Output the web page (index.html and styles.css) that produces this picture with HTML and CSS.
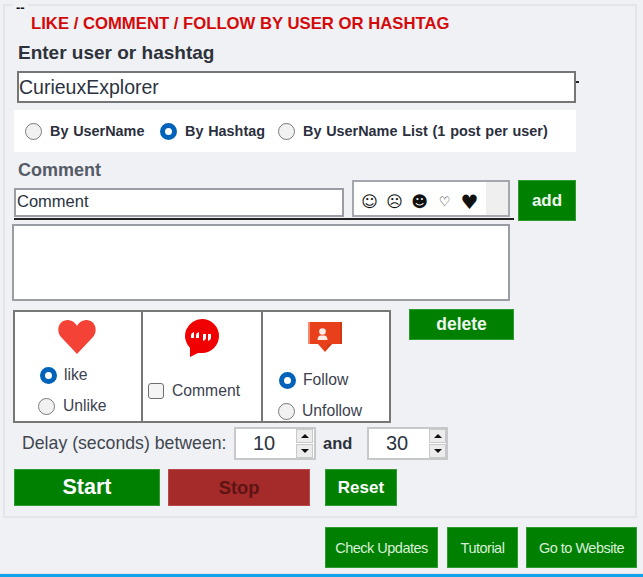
FILE: index.html
```html
<!DOCTYPE html>
<html lang="en">

<head>
    <meta charset="UTF-8">
    <meta name="viewport" content="width=device-width, initial-scale=1.0">
    <title>Like / Comment / Follow</title>
    <link rel="stylesheet" href="styles.css">
</head>

<body>

    <div class="panel">
        <span class="legend">--</span>

        <h1 class="title">LIKE / COMMENT / FOLLOW BY USER OR HASHTAG</h1>

        <label class="user-label" for="user">Enter user or hashtag</label>
        <div class="user-row">
            <input class="user-input" type="text" id="user" value="CurieuxExplorer">
            <span class="user-dash"></span>
        </div>

        <div class="mode-row">
            <label class="mode mode-user"><input type="radio" name="mode">By UserName</label>
            <label class="mode mode-tag"><input type="radio" name="mode" checked>By Hashtag</label>
            <label class="mode mode-list"><input type="radio" name="mode">By UserName List (1 post per user)</label>
        </div>

        <div class="comment-label">Comment</div>
        <div class="comment-row">
            <div class="comment-left">
                <input class="comment-input" type="text" value="Comment">
                <div class="emoji-box">
                    <div class="emoji-list">
                        <span>☺</span>
                        <span>☹</span>
                        <span>☻</span>
                        <span class="emoji-small">♡</span>
                        <span class="emoji-big">♥</span>
                    </div>
                    <div class="emoji-scroll"></div>
                </div>
            </div>
            <button class="btn btn-add">add</button>
        </div>

        <textarea class="comment-list"></textarea>

        <div class="actions-row">
            <div class="action action-like">
                <svg class="icon-heart" width="38" height="34" viewBox="0 0 38 34">
                    <path d="M19 34 L3 17 C-2 11 0 1 9 0 C13 0 17 2 19 6 C21 2 25 0 29 0 C38 1 40 11 35 17 Z" fill="#f44336" />
                </svg>
                <label class="opt opt-like"><input type="radio" name="like" checked>like</label>
                <label class="opt opt-unlike"><input type="radio" name="like">Unlike</label>
            </div>
            <div class="action action-comment">
                <svg class="icon-bubble" width="36" height="39" viewBox="0 0 36 39">
                    <path d="M18 1 A17 17 0 1 1 18 35 L14 35 L6 39 L6 30 A17 17 0 0 1 18 1 Z" fill="#f00000" />
                    <path d="M7 20 L7 17 Q7 15 10 14 L10 16 L10 20 Z M12 20 L12 17 Q12 15 15 14 L15 16 L15 20 Z M19 16 L22 16 L22 20 Q22 22 19 23 Z M24 16 L27 16 L27 20 Q27 22 24 23 Z" fill="#fff" />
                </svg>
                <label class="opt opt-comment"><input type="checkbox">Comment</label>
            </div>
            <div class="action action-follow">
                <svg class="icon-follow" width="36" height="32" viewBox="0 0 36 32">
                    <path d="M1 1 H35 V23 H25 L18 31 L11 23 H1 Z" fill="#e8401a" />
                    <path d="M1 1 H3 V23 H1 Z" fill="#fb8a6c" />
                    <path d="M33 1 H35 V23 H33 Z M18 29 L25 23 H21 Z" fill="#cf3a12" />
                    <circle cx="15.500" cy="10.500" r="3.300" fill="#fff" fill-opacity="0.9" />
                    <path d="M10.500 19 Q10.500 14.500 14 14.500 H17 Q20.500 14.500 20.500 19 Z" fill="#fff" fill-opacity="0.9" />
                </svg>
                <label class="opt opt-follow"><input type="radio" name="follow" checked>Follow</label>
                <label class="opt opt-unfollow"><input type="radio" name="follow">Unfollow</label>
            </div>
            <button class="btn btn-delete">delete</button>
        </div>

        <div class="delay-row">
            <span class="delay-label">Delay (seconds) between:</span>
            <div class="spin">
                <input class="spin-value" type="text" value="10">
                <div class="spin-arrows">
                    <span class="arrow-up"></span>
                    <span class="arrow-down"></span>
                </div>
            </div>
            <span class="delay-and">and</span>
            <div class="spin">
                <input class="spin-value" type="text" value="30">
                <div class="spin-arrows">
                    <span class="arrow-up"></span>
                    <span class="arrow-down"></span>
                </div>
            </div>
        </div>

        <div class="run-row">
            <button class="btn btn-start">Start</button>
            <button class="btn btn-stop">Stop</button>
            <button class="btn btn-reset">Reset</button>
        </div>
    </div>

    <div class="links-row">
        <button class="btn btn-link btn-updates">Check Updates</button>
        <button class="btn btn-link btn-tutorial">Tutorial</button>
        <button class="btn btn-link btn-website">Go to Website</button>
    </div>

    <div class="taskbar"></div>

</body>

</html>
```
FILE: styles.css
```css
* {
    box-sizing: border-box;
}

body {
    font-family: 'Liberation Sans', Arial, sans-serif;
    background-color: #eff1f5;
    color: #3a3f4a;
    margin: 0;
    height: 577px;
    overflow: hidden;
    display: flex;
    flex-direction: column;
}

input,
textarea,
button {
    font-family: inherit;
    margin: 0;
    outline: none;
    border-radius: 0;
}

/* group box */
.panel {
    position: relative;
    margin: 4px 6px 0 3px;
    height: 514px;
    border: 2px solid #e3e5e9;
    padding-left: 9px;
}

.legend {
    position: absolute;
    top: -5px;
    left: 8px;
    padding: 0 3px;
    background: #eff1f5;
    color: #111;
    font-size: 13px;
    font-weight: bold;
    line-height: 14px;
}

.title {
    margin: 9px 0 0 17px;
    font-size: 16.700px;
    line-height: 18px;
    font-weight: bold;
    color: #d40a0a;
    white-space: nowrap;
}

.user-label {
    display: block;
    margin: 10px 0 0 4px;
    font-size: 19px;
    line-height: 20px;
    font-weight: bold;
    color: #2e323a;
}

.user-row {
    display: flex;
    margin: 8px 0 0 3px;
}

.user-input {
    width: 559px;
    height: 32px;
    border: 2px solid #767676;
    background: #fff;
    padding: 0;
    font-size: 19.500px;
    color: #2c3340;
}

.user-dash {
    width: 3px;
    height: 2px;
    margin-top: 10px;
    background: #222;
}

.mode-row {
    display: flex;
    align-items: center;
    width: 562px;
    height: 42px;
    margin-top: 7px;
    background: #fff;
    padding-left: 11px;
}

.mode {
    display: flex;
    align-items: center;
    gap: 8px;
    font-size: 14.400px;
    word-spacing: 0.800px;
    font-weight: bold;
    color: #2b2f3d;
    white-space: nowrap;
}

.mode-user {
    width: 135px;
}

.mode-tag {
    width: 118px;
}

input[type="radio"] {
    appearance: none;
    flex: none;
    width: 17px;
    height: 17px;
    border: 1.500px solid #7b7b7b;
    border-radius: 50%;
    background: #f1f1f1;
}

input[type="radio"]:checked {
    border: 5px solid #0062b8;
    background: #fff;
}

input[type="checkbox"] {
    appearance: none;
    flex: none;
    width: 16px;
    height: 16px;
    border: 1.500px solid #6e6e6e;
    border-radius: 3px;
    background: #f4f4f4;
}

.comment-label {
    margin: 9px 0 0 4px;
    font-size: 18px;
    line-height: 19px;
    font-weight: bold;
    color: #555b66;
}

.comment-row {
    display: flex;
    gap: 4px;
}

.comment-left {
    display: flex;
    justify-content: space-between;
    align-items: flex-end;
    width: 500px;
    height: 40px;
    padding-bottom: 1px;
    border-bottom: 2px solid #222;
}

.comment-input {
    width: 330px;
    height: 29px;
    border: 2px solid #9a9da3;
    background: #fff;
    padding: 0 0 2px 1px;
    font-size: 16.500px;
    color: #2c3340;
}

.emoji-box {
    display: flex;
    width: 158px;
    height: 37px;
    margin-right: 4px;
    border: 2px solid #a4a7ad;
    background: #fff;
}

.emoji-list {
    display: flex;
    flex: 1;
    align-items: center;
    padding: 7px 0 0 3px;
    color: #111;
    font-family: 'DejaVu Sans', sans-serif;
    font-size: 16px;
    line-height: 22px;
}

.emoji-list span {
    width: 25px;
    text-align: center;
}

.emoji-list .emoji-small {
    font-size: 13px;
}

.emoji-list .emoji-big {
    font-size: 20px;
}

.emoji-scroll {
    width: 22px;
    background: #efefef;
}

.btn {
    border: 1px solid #2f9a2f;
    background-color: #008000;
    color: #fff;
    font-weight: bold;
    padding: 0;
}

.btn-add {
    width: 58px;
    height: 41px;
    font-size: 17px;
    color: #eef7ee;
}

.comment-list {
    display: block;
    width: 498px;
    height: 77px;
    margin: 3px 0 0 -2px;
    border: 2px solid #9a9da3;
    background: #fff;
    resize: none;
}

.actions-row {
    display: flex;
    align-items: flex-start;
    margin: 9px 0 0 -1px;
}

.action {
    display: flex;
    flex-direction: column;
    height: 113px;
    border: 2px solid #777;
    background: #fff;
    margin-right: -2px;
}

.action-like {
    width: 130px;
    padding-top: 8px;
}

.action-comment {
    width: 122px;
    padding-top: 7px;
}

.action-follow {
    width: 130px;
    padding-top: 9px;
}

.icon-heart {
    margin: 0 0 0 43px;
}

.icon-bubble {
    margin: -1px 0 0 41px;
}

.icon-follow {
    margin: 0 0 0 44px;
}

.opt {
    display: flex;
    align-items: center;
    gap: 8px;
    font-size: 15.700px;
    line-height: 18px;
    color: #3c4150;
    white-space: nowrap;
}

.opt-like {
    margin: 12px 0 0 25px;
    gap: 7px;
}

.opt-unlike {
    margin: 13px 0 0 23px;
}

.opt-comment {
    margin: 25px 0 0 5px;
}

.opt-follow {
    margin: 18px 0 0 16px;
    gap: 7px;
}

.opt-unfollow {
    margin: 13px 0 0 15px;
    gap: 7px;
}

.btn-delete {
    width: 105px;
    height: 31px;
    margin: -1px 0 0 20px;
    font-size: 17.500px;
    color: #eef7ee;
}

.delay-row {
    display: flex;
    align-items: center;
    height: 33px;
    margin: 4px 0 0 8px;
}

.delay-label {
    width: 212px;
    font-size: 17.700px;
    color: #41464f;
    white-space: nowrap;
}

.delay-and {
    width: 51px;
    padding-left: 7px;
    font-size: 16.500px;
    font-weight: bold;
    color: #2e323a;
}

.spin {
    display: flex;
    align-items: center;
    width: 82px;
    height: 33px;
    border: 2px solid #c6c8cc;
    background: #fff;
}

.spin:last-child {
    width: 81px;
}

.spin-value {
    width: 56px;
    margin-right: 4px;
    border: 0;
    padding: 0;
    background: transparent;
    font-size: 20px;
    color: #2c3340;
    text-align: center;
}

.spin-arrows {
    display: flex;
    flex-direction: column;
    gap: 1px;
    width: 17px;
    height: 29px;
}

.spin-arrows span {
    flex: 1;
    display: flex;
    align-items: center;
    justify-content: center;
    background: #ececec;
    border: 1px solid #c9c9c9;
}

.arrow-up::before {
    content: "";
    border-left: 4px solid transparent;
    border-right: 4px solid transparent;
    border-bottom: 4px solid #111;
}

.arrow-down::before {
    content: "";
    border-left: 4px solid transparent;
    border-right: 4px solid transparent;
    border-top: 4px solid #111;
}

.run-row {
    display: flex;
    margin: 9px 0 0 0;
}

.btn-start {
    width: 146px;
    height: 37px;
    font-size: 21.500px;
}

.btn-stop {
    width: 142px;
    height: 37px;
    margin-left: 8px;
    border-color: #b84a4a;
    background-color: #a52a2a;
    color: #5c1414;
    font-size: 18.300px;
}

.btn-reset {
    width: 72px;
    height: 37px;
    margin-left: 15px;
    font-size: 17px;
}

.links-row {
    display: flex;
    height: 41px;
    margin: 9px 0 0 325px;
}

.btn-link {
    font-size: 14.500px;
    letter-spacing: -0.500px;
    font-weight: normal;
    color: #d9efd9;
}

.btn-updates {
    width: 113px;
}

.btn-tutorial {
    width: 71px;
    margin-left: 9px;
}

.btn-website {
    width: 111px;
    margin-left: 8px;
}

.taskbar {
    height: 4px;
    margin-top: auto;
    border-top: 1px solid #e3e5e9;
    background: #10a5ea;
    background-clip: padding-box;
}
```
